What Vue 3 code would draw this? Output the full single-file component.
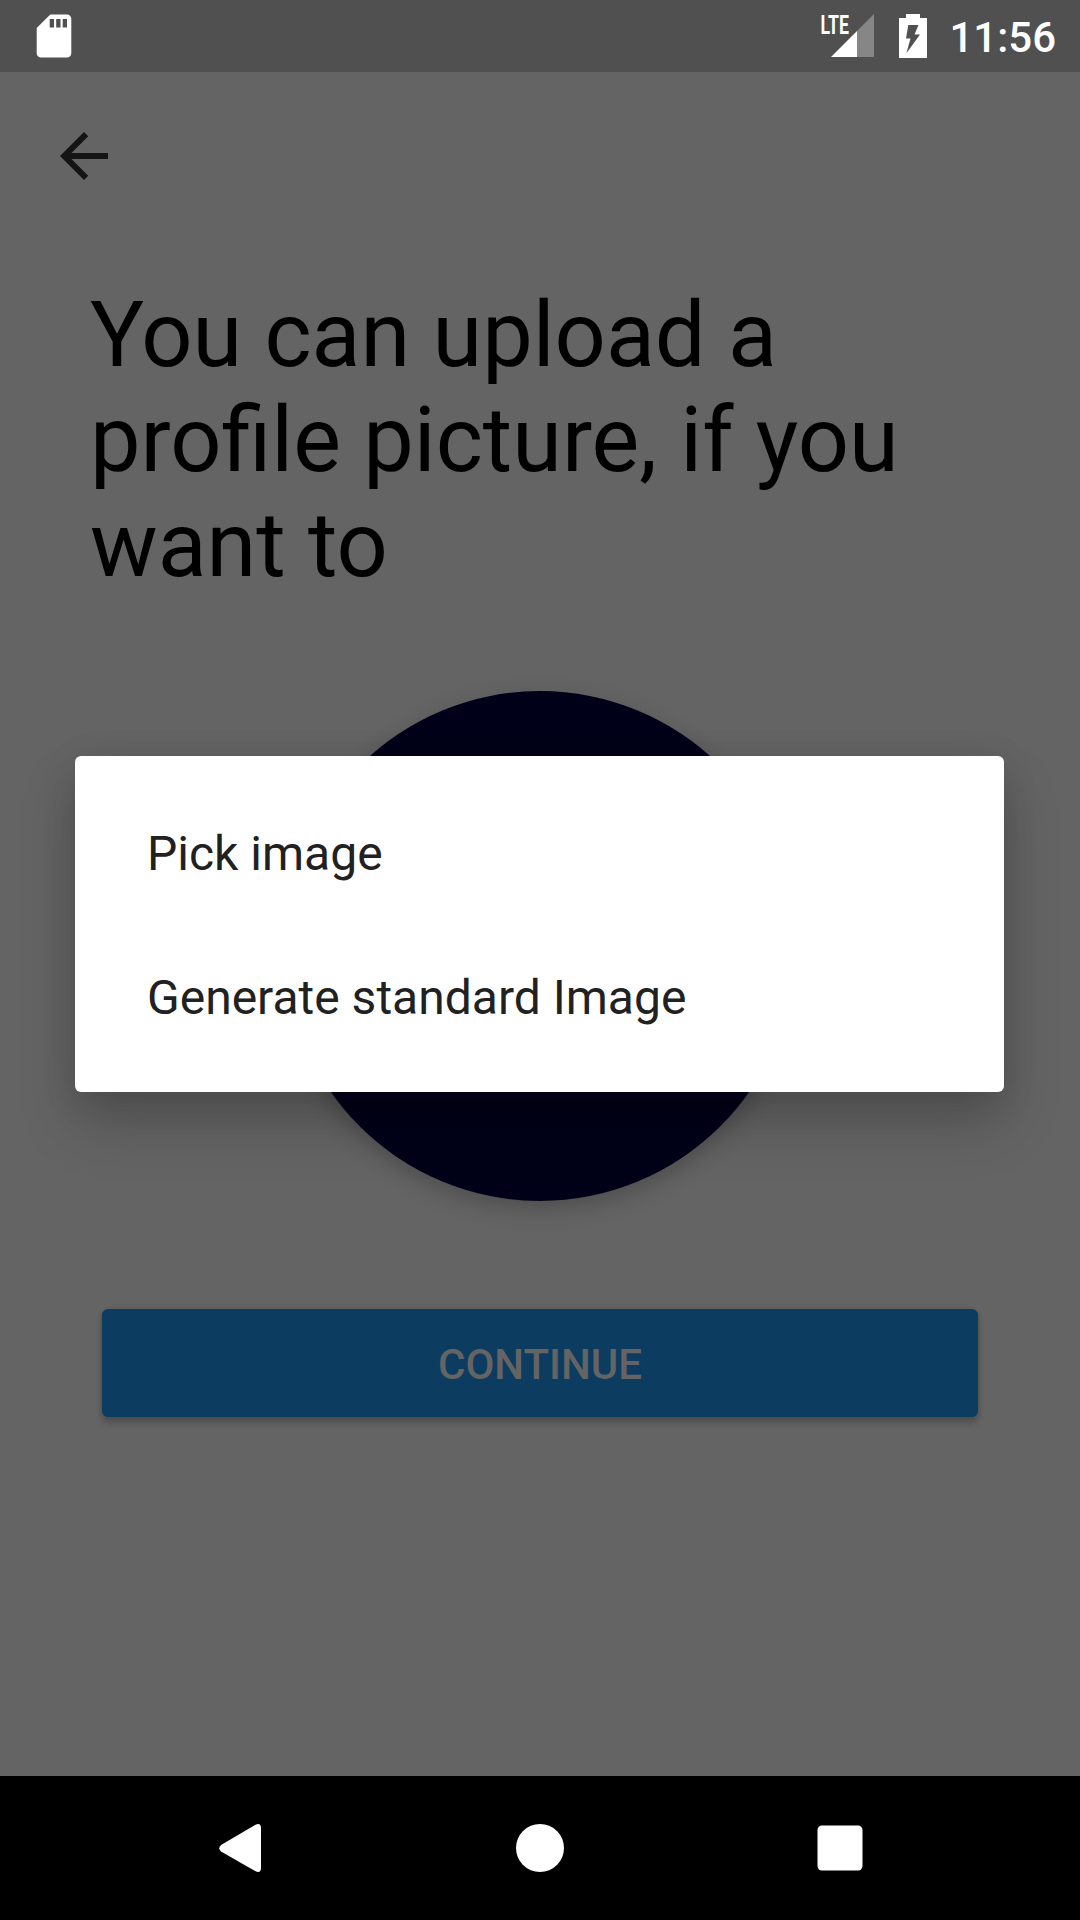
<script setup>
const options = ['Pick image', 'Generate standard Image']
</script>

<template>
  <div class="screen">
    <header class="status">
      <svg class="sd" width="36" height="44" viewBox="0 0 36 44">
        <path fill="#fff" fill-rule="evenodd" d="M14.3.5H31a4.3 4.3 0 0 1 4.3 4.3v34.400a4.300 4.300 0 0 1-4.300 4.300H5A4.300 4.300 0 0 1 .7 39.200V13.900ZM13.700 5v8.500h4.300V5ZM20.200 5v8.500h4.300V5ZM26.700 5v8.500H31V5Z" />
      </svg>
      <div class="status-right">
        <svg class="signal" width="56" height="46" viewBox="0 0 56 46">
          <path fill="#fff" d="M11 44 37 18v26Z" />
          <path fill="#868686" d="M37 18 54 1v43H37Z" />
          <text x="0.5" y="20.500" font-size="25.500" font-weight="700" textLength="28.500" lengthAdjust="spacingAndGlyphs" fill="#fff">LTE</text>
        </svg>
        <svg class="battery" width="28" height="44" viewBox="0 0 28 44">
          <path fill="#fff" fill-rule="evenodd" d="M7 0h14v4h7v40H0V4h7ZM9.300 11 7 24.500h4.500L7.400 39.200 21 20.500h-5.500L19.500 11Z" />
        </svg>
        <span class="clock">11:56</span>
      </div>
    </header>

    <main class="page">
      <svg class="back" width="72" height="72" viewBox="0 0 24 24">
        <path fill="#141414" d="M20 11H7.830l5.590-5.590L12 4l-8 8 8 8 1.410-1.410L7.830 13H20v-2z" />
      </svg>
      <h1 class="title">You can upload a<br />profile picture, <span class="tail">if you</span><br />want to</h1>
      <div class="avatar"></div>
      <button class="continue">CONTINUE</button>
    </main>

    <nav class="navbar">
      <svg width="1080" height="144" viewBox="0 0 1080 144">
        <path fill="#fff" d="M221 69 255.500 48.800Q260.800 46.500 261 52V92Q260.800 97.500 255.500 95.200L221 75.500Q217.500 72.300 221 69Z" />
        <circle cx="540" cy="72" r="24" fill="#fff" />
        <rect x="817.500" y="49.500" width="45" height="45" rx="4.500" fill="#fff" />
      </svg>
    </nav>

    <div class="dialog">
      <div v-for="o in options" :key="o" class="option">{{ o }}</div>
    </div>
  </div>
</template>

<style>
body {
  margin: 0;
  background: #646464;
}
</style>

<style scoped>
.screen {
  position: relative;
  width: 1080px;
  height: 1920px;
  display: flex;
  flex-direction: column;
  overflow: hidden;
  background: #646464;
  font-family: Roboto, sans-serif;
}
.status {
  height: 72px;
  flex: none;
  box-sizing: border-box;
  padding: 0 24px 0 36px;
  display: flex;
  justify-content: space-between;
  align-items: center;
  background: #505050;
}
.status-right {
  display: flex;
  align-items: center;
}
.signal {
  overflow: visible;
}
.battery {
  margin: 0 22px 0 23px;
}
.clock {
  color: #fff;
  font-size: 42px;
  font-weight: 500;
  line-height: 49px;
  padding-top: 3px;
}
.page {
  flex: 1;
  display: flex;
  flex-direction: column;
}
.back {
  display: block;
  margin: 48px 0 0 48px;
}
.title {
  margin: 91px 0 0 90px;
  font-size: 90px;
  font-weight: 400;
  line-height: 105px;
  color: #000;
  white-space: nowrap;
}
.tail {
  margin-left: 1px;
}
.avatar {
  align-self: center;
  width: 510px;
  height: 510px;
  margin-top: 93px;
  border-radius: 50%;
  background: #000018;
  box-shadow: 0 8px 22px rgba(0, 0, 0, 0.22);
}
.continue {
  margin: 108px 102px 0;
  height: 108px;
  padding: 3px 0 0;
  border: 0;
  border-radius: 6px;
  background: #0d3c61;
  color: #646464;
  font: 500 42px/49px Roboto, sans-serif;
  box-shadow: 0 6px 6px rgba(0, 0, 0, 0.2), 0 0 5px rgba(0, 0, 0, 0.12);
}
.navbar {
  height: 144px;
  flex: none;
  background: #000;
}
.navbar svg {
  display: block;
}
.dialog {
  position: absolute;
  left: 75px;
  top: 756px;
  width: 929px;
  box-sizing: border-box;
  padding: 24px 72px;
  border-radius: 6px;
  background: #fff;
  box-shadow: 0 31px 58px rgba(0, 0, 0, 0.2), 0 6px 36px rgba(0, 0, 0, 0.1);
}
.option {
  height: 144px;
  line-height: 148px;
  font-size: 48px;
  color: #212121;
}
</style>
